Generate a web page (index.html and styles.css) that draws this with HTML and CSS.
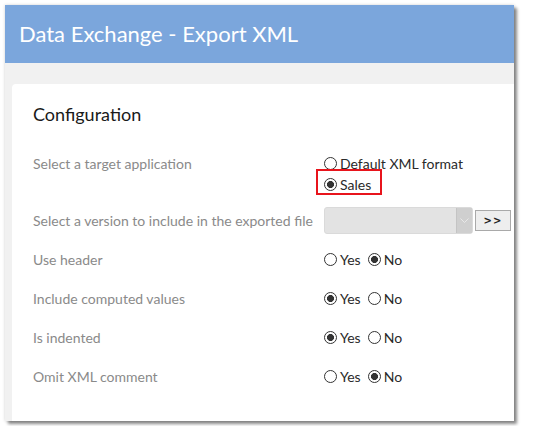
FILE: index.html
```html
<!DOCTYPE html>
<html>
<head>
<meta charset="utf-8">
<link rel="stylesheet" href="styles.css">
</head>
<body>
<div class="window">
  <div class="header">Data Exchange - Export XML</div>
  <div class="content">
    <div class="card">
      <h2 class="title">Configuration</h2>
      <div class="row row-app">
        <div class="label">Select a target application</div>
        <div class="controls stack">
          <label class="opt"><input type="radio" name="app"><span>Default XML format</span></label>
          <label class="opt highlight"><input type="radio" name="app" checked><span>Sales</span></label>
        </div>
      </div>
      <div class="row row-version">
        <div class="label">Select a version to include in the exported file</div>
        <div class="controls">
          <div class="select"><span class="select-arrow"><svg width="9" height="6" viewBox="0 0 9 6"><path d="M0.5 0.5 L4.5 4.5 L8.5 0.5" fill="none" stroke="#e8e8e8" stroke-width="1"/></svg></span></div>
          <button class="go">&gt;&gt;</button>
        </div>
      </div>
      <div class="row">
        <div class="label">Use header</div>
        <div class="controls">
          <label class="opt yes"><input type="radio" name="hdr"><span>Yes</span></label>
          <label class="opt"><input type="radio" name="hdr" checked><span>No</span></label>
        </div>
      </div>
      <div class="row">
        <div class="label">Include computed values</div>
        <div class="controls">
          <label class="opt yes"><input type="radio" name="cmp" checked><span>Yes</span></label>
          <label class="opt"><input type="radio" name="cmp"><span>No</span></label>
        </div>
      </div>
      <div class="row">
        <div class="label">Is indented</div>
        <div class="controls">
          <label class="opt yes"><input type="radio" name="ind" checked><span>Yes</span></label>
          <label class="opt"><input type="radio" name="ind"><span>No</span></label>
        </div>
      </div>
      <div class="row">
        <div class="label">Omit XML comment</div>
        <div class="controls">
          <label class="opt yes"><input type="radio" name="cmt"><span>Yes</span></label>
          <label class="opt"><input type="radio" name="cmt" checked><span>No</span></label>
        </div>
      </div>
    </div>
  </div>
</div>
</body>
</html>
```

FILE: styles.css
```css
* { box-sizing: border-box; }
html, body { margin: 0; background: #ffffff; }
body {
  padding: 5px;
  font-family: Lato, "Open Sans", sans-serif;
}
.window {
  width: 509px;
  height: 416px;
  background: #f1f1f1;
  display: flex;
  flex-direction: column;
  box-shadow: 0 0 3px rgba(0,0,0,0.18), 3px 3px 3px rgba(0,0,0,0.45);
}
.header {
  height: 58px;
  line-height: 58px;
  background: #7ba6dc;
  color: #ffffff;
  font-size: 22px;
  padding-left: 14px;
  flex: none;
}
.content {
  flex: 1;
  display: flex;
  padding: 21px 0 0 7px;
}
.card {
  flex: 1;
  background: #ffffff;
  border-radius: 4px 0 0 0;
  padding: 19px 0 0 21px;
}
.title {
  margin: 0;
  font-size: 18px;
  line-height: 22px;
  font-weight: normal;
  color: #1a1a1a;
}
.row {
  display: flex;
  align-items: center;
  height: 39px;
  font-size: 14px;
}
.label {
  width: 291px;
  color: #8a8a8a;
  flex: none;
}
.controls {
  display: flex;
  align-items: center;
}
.row-app {
  margin-top: 28px;
  height: 48px;
  align-items: flex-start;
}
.row-app .label { line-height: 21px; }
.stack {
  flex-direction: column;
  align-items: flex-start;
}
.opt {
  display: flex;
  align-items: center;
  height: 21px;
  color: #2a2a2a;
  position: relative;
}
.opt input {
  -webkit-appearance: none;
  appearance: none;
  width: 13px;
  height: 13px;
  margin: 0 3px 0 0;
  border: 1px solid #333333;
  border-radius: 50%;
  background: #ffffff;
}
.opt input:checked {
  background: radial-gradient(circle, #333333 0, #333333 3.2px, #ffffff 3.8px);
}
.yes { margin-right: 7px; }
.highlight::after {
  content: "";
  position: absolute;
  left: -8px;
  right: -11px;
  top: -5px;
  bottom: 0;
  border: 2px solid #e8141c;
}
.select {
  width: 149px;
  height: 27px;
  background: #e3e3e3;
  border: 1px solid #dadada;
  border-radius: 3px;
  display: flex;
  justify-content: flex-end;
}
.select-arrow {
  width: 16px;
  background: #cfcfcf;
  border-left: 1px solid #c4c4c4;
  display: flex;
  align-items: center;
  justify-content: center;
}
.go {
  margin-left: 2px;
  width: 36px;
  height: 21px;
  padding: 0;
  background: #eeeeee;
  border: 1px solid #a9a9a9;
  border-radius: 0;
  font-family: "DejaVu Sans", sans-serif;
  font-size: 10px;
  font-weight: bold;
  color: #222222;
  letter-spacing: 1px;
}
```
